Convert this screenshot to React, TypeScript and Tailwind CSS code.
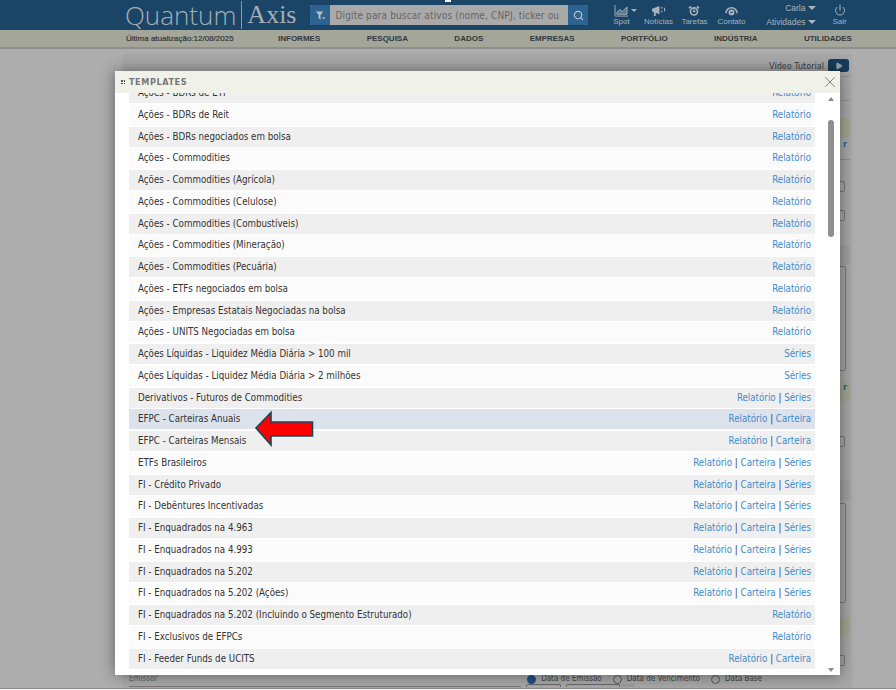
import { Play, Power, Search, X } from 'lucide-react';

type Row = { name: string; links: string[] };

const R = 'Relatório';
const C = 'Carteira';
const S = 'Séries';

const rows: Row[] = [
  { name: 'Ações - BDRs de Reit', links: [R] },
  { name: 'Ações - BDRs negociados em bolsa', links: [R] },
  { name: 'Ações - Commodities', links: [R] },
  { name: 'Ações - Commodities (Agrícola)', links: [R] },
  { name: 'Ações - Commodities (Celulose)', links: [R] },
  { name: 'Ações - Commodities (Combustíveis)', links: [R] },
  { name: 'Ações - Commodities (Mineração)', links: [R] },
  { name: 'Ações - Commodities (Pecuária)', links: [R] },
  { name: 'Ações - ETFs negociados em bolsa', links: [R] },
  { name: 'Ações - Empresas Estatais Negociadas na bolsa', links: [R] },
  { name: 'Ações - UNITS Negociadas em bolsa', links: [R] },
  { name: 'Ações Líquidas - Liquidez Média Diária > 100 mil', links: [S] },
  { name: 'Ações Líquidas - Liquidez Média Diária > 2 milhões', links: [S] },
  { name: 'Derivativos - Futuros de Commodities', links: [R, S] },
  { name: 'EFPC - Carteiras Anuais', links: [R, C] },
  { name: 'EFPC - Carteiras Mensais', links: [R, C] },
  { name: 'ETFs Brasileiros', links: [R, C, S] },
  { name: 'FI - Crédito Privado', links: [R, C, S] },
  { name: 'FI - Debêntures Incentivadas', links: [R, C, S] },
  { name: 'FI - Enquadrados na 4.963', links: [R, C, S] },
  { name: 'FI - Enquadrados na 4.993', links: [R, C, S] },
  { name: 'FI - Enquadrados na 5.202', links: [R, C, S] },
  { name: 'FI - Enquadrados na 5.202 (Ações)', links: [R, C, S] },
  { name: 'FI - Enquadrados na 5.202 (Incluindo o Segmento Estruturado)', links: [R] },
  { name: 'FI - Exclusivos de EFPCs', links: [R] },
  { name: 'FI - Feeder Funds de UCITS', links: [R, C] },
];

const menu = ['INFORMES', 'PESQUISA', 'DADOS', 'EMPRESAS', 'PORTFÓLIO', 'INDÚSTRIA', 'UTILIDADES'];

function ListRow({ row, index }: { row: Row; index: number }) {
  const highlighted = row.name === 'EFPC - Carteiras Anuais';
  const bg = highlighted ? 'bg-[#dbe2ec]' : index % 2 === 0 ? 'bg-[#fbfbfb]' : 'bg-[#efefef]';
  return (
    <div className={`flex h-[20px] shrink-0 items-center justify-between pl-[9px] pr-[4px] ${bg}`}>
      <span className="text-[#333]">{row.name}</span>
      <span className="text-[#333]">
        {row.links.map((link, i) => (
          <span key={link}>
            {i > 0 && ' | '}
            <span className="text-[#428bca]">{link}</span>
          </span>
        ))}
      </span>
    </div>
  );
}

function Caret() {
  return <span className="inline-block h-0 w-0 border-x-[4px] border-t-[4px] border-x-transparent border-t-[#a9b3bb]" />;
}

function Select({ className }: { className: string }) {
  return <div className={`ml-auto mr-[5px] h-[11px] w-[30px] rounded-[2px] border border-[#777] ${className}`} />;
}

export default function App() {
  return (
    <div className="relative h-[690px] w-[896px] overflow-hidden bg-[#adadad] font-['DejaVu_Sans_Condensed','DejaVu_Sans',sans-serif] [font-stretch:condensed]">
      {/* topo */}
      <header className="flex h-[30px] items-center bg-[#1a4567] pl-[125px] text-[#a9b3bb]">
        <span className="font-['Open_Sans',sans-serif] text-[26px] font-light leading-none text-[#a7aeb3] [font-stretch:normal]">Quantum</span>
        <span className="mx-[5px] h-[28px] w-px bg-[#8d9aa5]" />
        <span className="font-['Liberation_Serif',serif] text-[26px] leading-none text-[#a7aeb3] [font-stretch:normal]">Axis</span>
        <div className="ml-[14px] flex h-[20px] w-[278px] items-center rounded-[2px] bg-[#a9a9a9]">
          <span className="flex h-full w-[20px] items-center justify-center rounded-l-[2px] bg-[#2d6390]">
            <svg viewBox="0 0 12 12" className="h-[11px] w-[11px]" fill="#b7c3cd">
              <path d="M1 1.5h8L6 5.5v5L4 9V5.5z" />
              <rect x="8" y="8" width="3" height="1.4" />
            </svg>
          </span>
          <span className="w-[233px] overflow-hidden whitespace-nowrap pl-[5px] text-[10px] tracking-[0.15px] text-[#666]">
            Digite para buscar ativos (nome, CNPJ, ticker ou código)
          </span>
          <span className="ml-auto flex h-full w-[20px] items-center justify-center rounded-r-[2px] bg-[#2d6390]">
            <Search size={11} strokeWidth={2.5} className="text-[#b7c3cd]" />
          </span>
        </div>
        <nav className="ml-[20px] flex items-center font-['Liberation_Sans',sans-serif] text-[8px] leading-[9px] [font-stretch:normal]">
          <div className="flex w-[26px] flex-col items-center">
            <svg viewBox="0 0 16 13" className="h-[12px] w-[15px]" fill="none" stroke="#a9b3bb" strokeWidth="1">
              <path d="M1 0v12h14" />
              <path d="M3 10V8l3-3 3 2 5-5v8z" fill="#a9b3bb" fillOpacity="0.45" />
            </svg>
            <span>Spot</span>
          </div>
          <span className="-ml-[3px] -mt-[10px]">
            <span className="block h-0 w-0 border-x-[3px] border-t-[3px] border-x-transparent border-t-[#a9b3bb]" />
          </span>
          <div className="ml-[7px] flex w-[28px] flex-col items-center">
            <svg viewBox="0 0 16 13" className="h-[12px] w-[15px]" fill="#a9b3bb">
              <path d="M1 4l8-3v9L5 8.5V12H3V7.5L1 7z" />
              <rect x="11" y="2" width="1.2" height="2" />
              <rect x="11" y="6" width="1.2" height="2" />
              <rect x="14" y="3" width="1.2" height="4" />
            </svg>
            <span>Notícias</span>
          </div>
          <div className="ml-[9px] flex w-[26px] flex-col items-center">
            <svg viewBox="0 0 14 13" className="h-[12px] w-[14px]" fill="none" stroke="#a9b3bb" strokeWidth="1.8">
              <circle cx="7" cy="7" r="3.8" />
              <path d="M1.5 3.5l2.5-2M12.5 3.5l-2.5-2M7 5v2h1.5" />
            </svg>
            <span>Tarefas</span>
          </div>
          <div className="ml-[11px] flex w-[26px] flex-col items-center">
            <svg viewBox="0 0 16 13" className="h-[12px] w-[15px]" fill="none" stroke="#a9b3bb" strokeWidth="1.6">
              <path d="M2 9a6 6 0 0 1 12 0" />
              <circle cx="8" cy="8" r="3.2" fill="#a9b3bb" stroke="none" />
              <path d="M6.5 8h3" stroke="#1a4567" strokeWidth="1" />
            </svg>
            <span>Contato</span>
          </div>
          <div className="ml-[26px] flex w-[46px] flex-col items-end gap-[5px] text-[8.5px]">
            <span className="flex items-center gap-[3px]">
              Carla <Caret />
            </span>
            <span className="flex items-center gap-[3px] whitespace-nowrap">
              Atividades <Caret />
            </span>
          </div>
          <div className="ml-[16px] flex flex-col items-center">
            <Power size={12} strokeWidth={2} />
            <span className="mt-[1px]">Sair</span>
          </div>
        </nav>
      </header>

      {/* menu */}
      <div className="flex h-[19px] items-center border-b-[2px] border-[#8e8e8e] bg-[#a4a69a] pl-[126px] pr-[44px] pt-[1px] font-['Liberation_Sans',sans-serif] text-[8px] font-bold text-[#33393d] [font-stretch:normal]">
        <span className="w-[128px] whitespace-nowrap text-[8px] font-normal [-webkit-text-stroke:0.2px_#33393d]">Última atualização:12/08/2025</span>
        <div className="flex flex-1 justify-between pl-[24px]">
          {menu.map((item) => (
            <span key={item}>{item}</span>
          ))}
        </div>
      </div>

      {/* pagina atras do modal */}
      <div className="h-[639px] pl-[123px] pt-[5px]">
        <div className="flex h-[634px] w-[729px] flex-col bg-[#a7a7a7] pr-[2px]">
          <div className="flex h-[18px] shrink-0 items-end justify-end pr-[1px] text-[9px] leading-[12px] text-[#39424a]">
            <span>Vídeo Tutorial</span>
            <span className="ml-[4px] flex h-[13px] w-[21px] items-center justify-center rounded-[3px] bg-[#163c5b]">
              <Play size={8} className="fill-[#9aa4ac] text-[#9aa4ac]" />
            </span>
          </div>
          <div className="mt-[4px] border-t border-dotted border-[#777]" />
          <div className="mt-[23px] border-t border-dotted border-[#777]" />
          <div className="mt-[17px] h-[20px] bg-[#a2a492]" />
          <div className="h-[22px] border-b border-[#8f8f8f] pr-[3px] text-right text-[9px] font-bold text-[#2d6390]">r</div>
          <Select className="mt-[21px]" />
          <Select className="mt-[18px]" />
          <div className="mt-[24px] h-[20px] bg-[#9f9f9f]" />
          <div className="ml-auto mr-[4px] mt-[1px] h-[105px] w-[30px] rounded-[2px] border border-[#777]" />
          <div className="mt-[10px] h-[20px] bg-[#a2a492] pr-[3px] text-right text-[9px] font-bold text-[#2d6390]">r</div>
          <Select className="mt-[35px]" />
          <div className="mt-[33px] h-[20px] bg-[#9f9f9f]" />
          <div className="ml-auto mr-[4px] mt-[3px] h-[100px] w-[30px] rounded-[2px] border border-[#777]" />
          <div className="mt-[14px] h-[20px] bg-[#a2a492]" />
          <Select className="mt-[18px]" />
          {/* linha do emissor, meio coberta pelo modal */}
          <div className="mt-[8px] flex h-[10px] shrink-0 justify-between pl-[6px] pr-[88px] text-[8px] leading-[10px] text-[#5a6670]">
            <span>Emissor</span>
            <div className="flex items-center text-[#444]">
              <span className="mr-[5px] h-[9px] w-[9px] rounded-full border-[2px] border-[#1f4f87] bg-[#1f4f87]" />
              <span className="mr-[11px]">Data de Emissão</span>
              <span className="mr-[5px] h-[9px] w-[9px] rounded-full border border-[#555]" />
              <span className="mr-[11px]">Data de Vencimento</span>
              <span className="mr-[5px] h-[9px] w-[9px] rounded-full border border-[#555]" />
              <span>Data Base</span>
            </div>
          </div>
          <div className="flex h-[3px] shrink-0 pl-[6px]">
            <div className="mt-[2px] w-[392px] border-t border-[#777]" />
            <div className="ml-[5px] h-[3px] w-[35px] rounded-t-[2px] border-x border-t border-[#666]" />
            <div className="ml-[5px] h-[3px] w-[54px] rounded-t-[2px] border-x border-t border-[#666]" />
            <div className="ml-[1px] h-[3px] w-[13px] bg-[#999]" />
          </div>
        </div>
      </div>
      <div className="h-[2px] border-t border-[#888] bg-white" />

      {/* modal */}
      <div className="absolute left-[115px] top-[71px] flex h-[604px] w-[725px] flex-col bg-white shadow-[0_0_14px_rgba(0,0,0,0.45)]">
        <div className="flex h-[22px] shrink-0 items-center bg-[#f0f1e8] pl-[6px] pr-[1px]">
          <span className="mr-[4px] grid grid-cols-2 gap-[1px]">
            <i className="h-[1.5px] w-[1.5px] bg-[#555]" />
            <i className="h-[1.5px] w-[1.5px] bg-[#555]" />
            <i className="h-[1.5px] w-[1.5px] bg-[#555]" />
            <i className="h-[1.5px] w-[1.5px] bg-[#555]" />
          </span>
          <span className="mt-[1px] text-[9px] font-bold tracking-[0.6px] text-[#777]">TEMPLATES</span>
          <X size={18} strokeWidth={1.2} className="ml-auto text-[#777]" />
        </div>
        <div className="relative flex min-h-0 flex-1">
          <div className="ml-[14px] flex h-[582px] w-[686px] flex-col gap-[1.75px] overflow-hidden text-[9.7px] leading-none">
            <div className="-mt-[10px] shrink-0">
              <ListRow row={{ name: 'Ações - BDRs de ETF', links: [R] }} index={1} />
            </div>
            {rows.map((row, i) => (
              <ListRow key={row.name} row={row} index={i} />
            ))}
          </div>
          <div className="relative ml-[11px] flex w-[10px] flex-col items-center">
            <span className="mt-[4px] h-0 w-0 border-x-[3px] border-b-[4px] border-x-transparent border-b-[#8a8a8a]" />
            <span className="mt-[19px] h-[117px] w-[6px] rounded-[3px] bg-[#8f8f8f]" />
            <span className="absolute bottom-[3px] h-0 w-0 border-x-[3px] border-t-[4px] border-x-transparent border-t-[#8a8a8a]" />
          </div>
        </div>
      </div>

      {/* seta */}
      <svg viewBox="0 0 61 37" className="absolute left-[254px] top-[410px] h-[37px] w-[61px]">
        <path d="M2 18L17 2.5V12H58.5V26H17V35z" fill="#fe0000" stroke="#17465f" strokeWidth="1.6" />
      </svg>

      {/* marca do topo */}
      <span className="absolute left-[445px] top-0 h-[2px] w-[6px] bg-white" />
    </div>
  );
}
